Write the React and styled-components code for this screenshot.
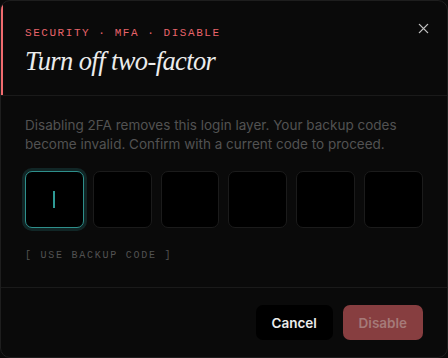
import React from "react";
import styled, { createGlobalStyle } from "styled-components";

const Global = createGlobalStyle`
  html, body { margin: 0; padding: 0; background: #0a0a0a; }
  * { box-sizing: border-box; }
`;

const Dialog = styled.div`
  width: 448px;
  height: 358px;
  background: #0a0a0a;
  border: 1px solid #1e1e1e;
  border-radius: 10px;
  display: flex;
  flex-direction: column;
  overflow: hidden;
  position: relative;
  font-family: Inter, "Liberation Sans", sans-serif;
`;

const Header = styled.header`
  position: relative;
  padding: 26px 24px 17px 24px;
  border-bottom: 1px solid #1a1a1a;
  display: flex;
  flex-direction: column;
  gap: 5px;
  &::before {
    content: "";
    position: absolute;
    left: -1px;
    top: 3px;
    bottom: 0;
    width: 3px;
    background: #f06b6e;
  }
`;

const Eyebrow = styled.div`
  font-family: "Liberation Mono", "DejaVu Sans Mono", monospace;
  font-size: 11px;
  line-height: 12px;
  letter-spacing: 1.55px;
  color: #e8646b;
`;

const Title = styled.h1`
  margin: 0;
  font-family: "Liberation Serif", "DejaVu Serif", serif;
  font-style: italic;
  font-weight: 400;
  font-size: 26.5px;
  line-height: 34px;
  color: #ececec;
  letter-spacing: -0.6px;
`;

const Close = styled.button`
  position: absolute;
  top: 18px;
  right: 15px;
  width: 18px;
  height: 18px;
  padding: 0;
  border: 0;
  background: transparent;
  display: flex;
  align-items: center;
  justify-content: center;
  color: #bdbdbd;
`;

const Body = styled.section`
  flex: 1;
  padding: 20px 24px 0 24px;
  display: flex;
  flex-direction: column;
`;

const Text = styled.p`
  margin: 0;
  font-size: 13.5px;
  line-height: 19px;
  color: #525252;
`;

const OtpRow = styled.div`
  margin-top: 17px;
  display: grid;
  grid-template-columns: repeat(6, 1fr);
  gap: 9px;
`;

const Cell = styled.div`
  height: 57px;
  border-radius: 7px;
  background: #000;
  border: 1px solid ${(p) => (p.$active ? "#2e8f8b" : "#1b1b1b")};
  box-shadow: ${(p) => (p.$active ? "0 0 0 3px rgba(46,143,139,0.22)" : "none")};
  display: flex;
  align-items: center;
  justify-content: center;
`;

const Caret = styled.span`
  width: 2px;
  height: 17px;
  background: #2e9a95;
`;

const Backup = styled.button`
  margin-top: 22px;
  align-self: flex-start;
  padding: 0;
  border: 0;
  background: transparent;
  font-family: "Liberation Mono", "DejaVu Sans Mono", monospace;
  font-size: 10px;
  line-height: 12px;
  letter-spacing: 1.75px;
  color: #525252;
`;

const Footer = styled.footer`
  border-top: 1px solid #1a1a1a;
  padding: 17px 24px 17px 24px;
  display: flex;
  justify-content: flex-end;
  gap: 10px;
`;

const Button = styled.button`
  height: 35px;
  padding: 0 ${(p) => (p.$danger ? "16px" : "15px")};
  min-width: ${(p) => (p.$danger ? "80px" : "77px")};
  border-radius: 7px;
  border: 0;
  font-family: Inter, "Liberation Sans", sans-serif;
  font-weight: 600;
  font-size: 13.5px;
  background: ${(p) => (p.$danger ? "#873e40" : "#000")};
  color: ${(p) => (p.$danger ? "#a57a79" : "#ececec")};
`;

export default function App() {
  return (
    <>
      <Global />
      <Dialog>
        <Header>
          <Eyebrow>SECURITY · MFA · DISABLE</Eyebrow>
          <Title>Turn off two-factor</Title>
          <Close aria-label="Close">
            <svg width="11" height="11" viewBox="0 0 12 12" fill="none" stroke="currentColor" strokeWidth="1.5" strokeLinecap="round">
              <path d="M1.5 1.5L10.5 10.5M10.5 1.5L1.5 10.5" />
            </svg>
          </Close>
        </Header>
        <Body>
          <Text>
            Disabling 2FA removes this login layer. Your backup codes become invalid. Confirm with a current code to proceed.
          </Text>
          <OtpRow>
            {[0, 1, 2, 3, 4, 5].map((i) => (
              <Cell key={i} $active={i === 0}>
                {i === 0 && <Caret />}
              </Cell>
            ))}
          </OtpRow>
          <Backup>[ USE BACKUP CODE ]</Backup>
        </Body>
        <Footer>
          <Button>Cancel</Button>
          <Button $danger disabled>Disable</Button>
        </Footer>
      </Dialog>
    </>
  );
}
